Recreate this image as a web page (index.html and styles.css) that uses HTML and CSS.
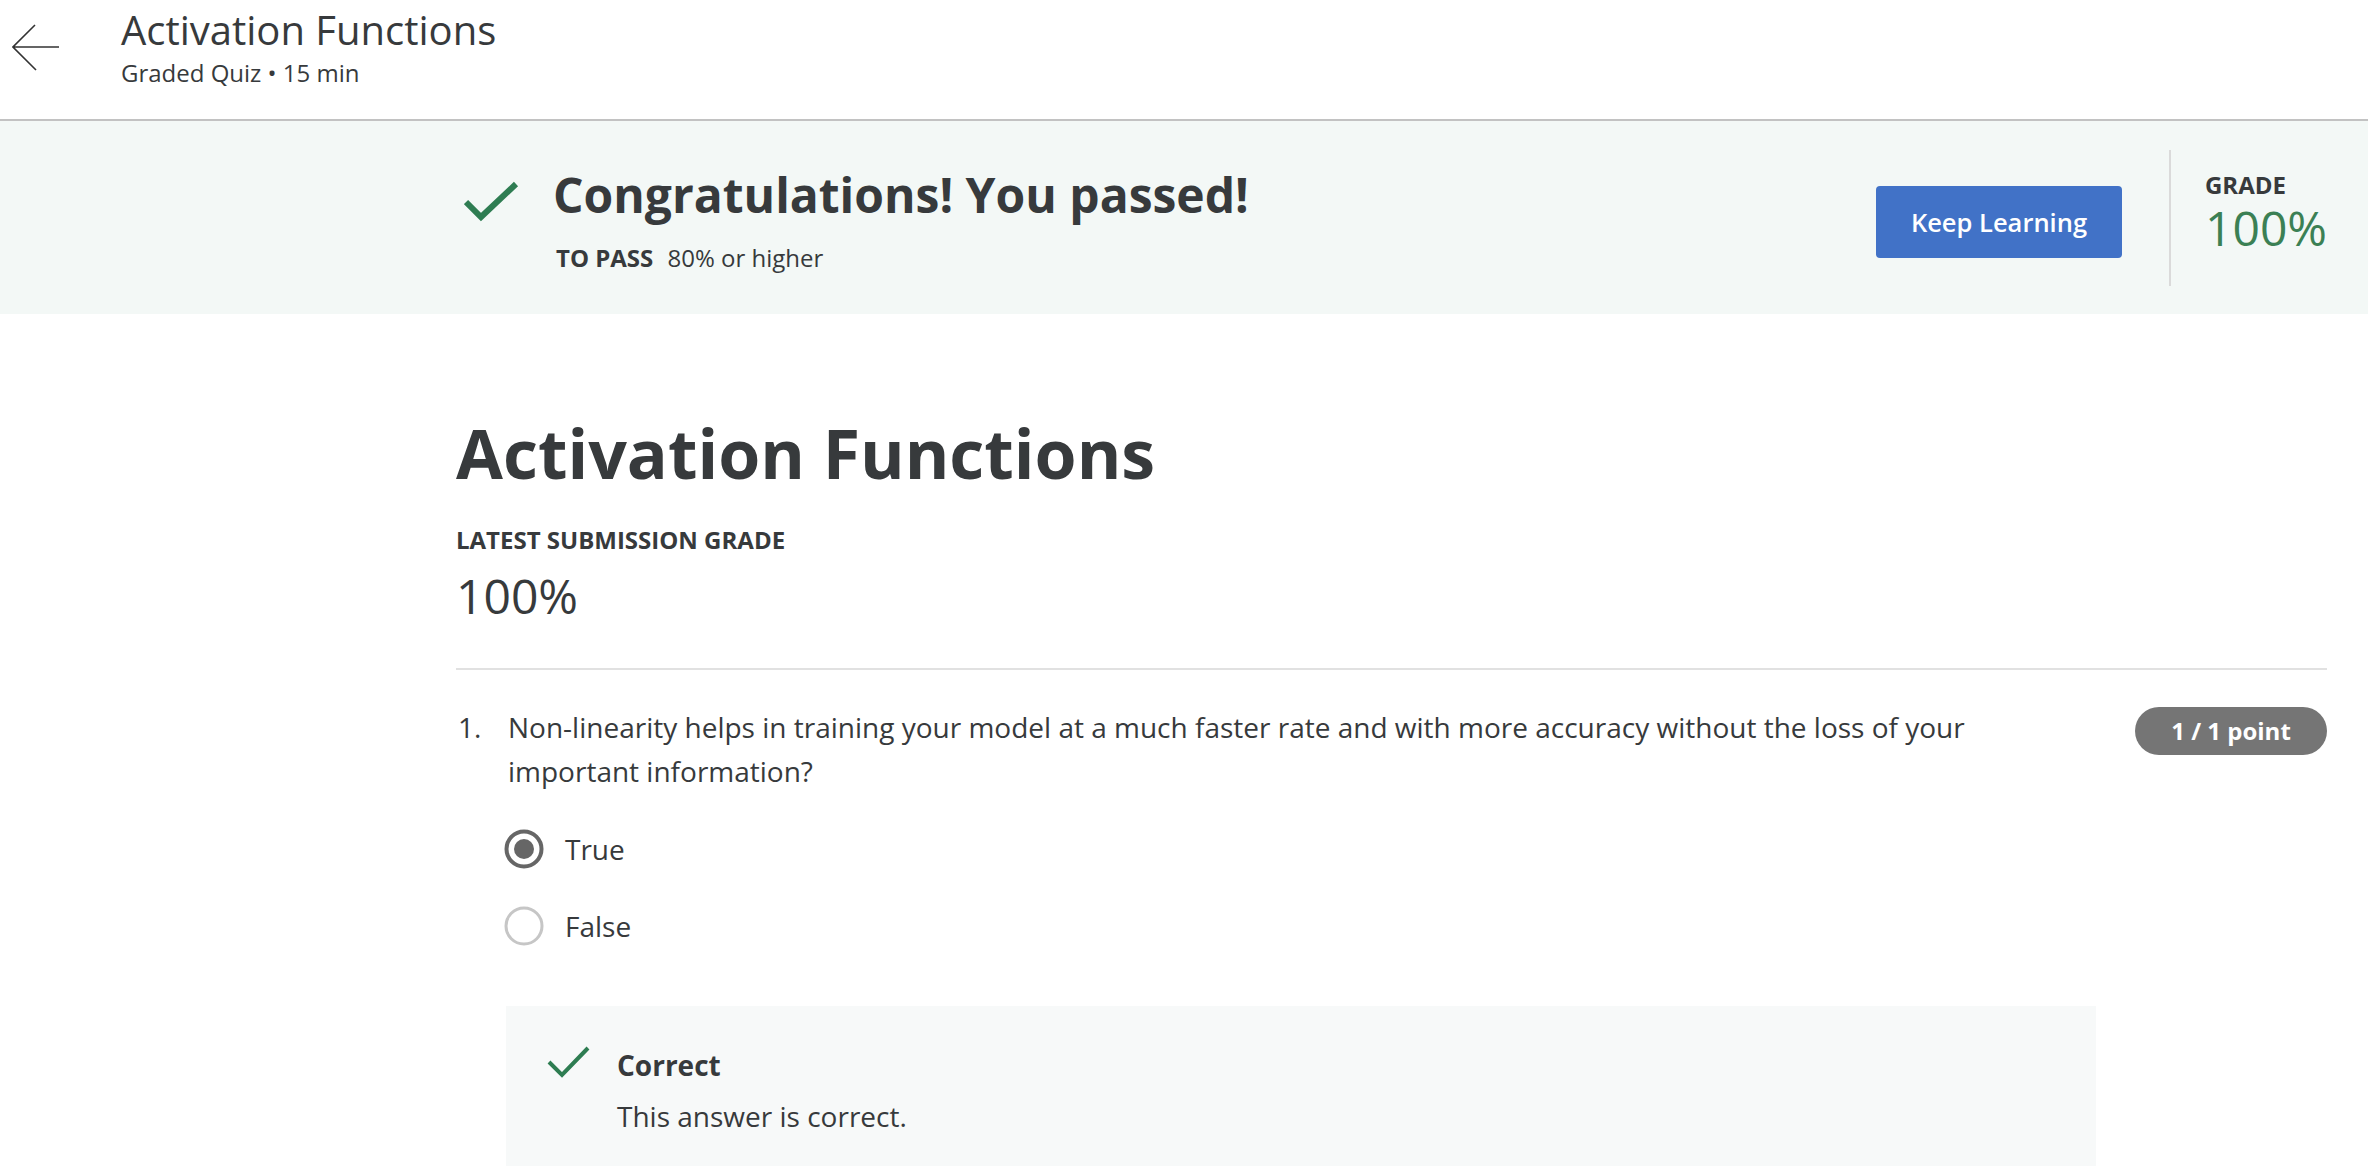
FILE: index.html
```html
<!DOCTYPE html>
<html lang="en">
<head>
<meta charset="utf-8">
<title>Activation Functions</title>
<link rel="stylesheet" href="styles.css">
</head>
<body>
<header class="topbar">
  <a class="back" href="#" aria-label="Back">
    <svg width="48" height="48" viewBox="0 0 48 48"><path d="M47 23 H1 M23 1 L1 23 L24 46" fill="none" stroke="#333" stroke-width="1.6"/></svg>
  </a>
  <div class="topbar-text">
    <div class="topbar-title">Activation Functions</div>
    <div class="topbar-sub">Graded Quiz • 15 min</div>
  </div>
</header>

<section class="banner">
  <svg class="banner-check" width="55" height="41" viewBox="0 0 55 41"><polyline points="2,21 17,36 52,3" fill="none" stroke="#2e7d52" stroke-width="6"/></svg>
  <div class="banner-text">
    <div class="banner-title">Congratulations! You passed!</div>
    <div class="banner-pass"><span class="label">TO PASS</span> 80% or higher</div>
  </div>
  <div class="spacer"></div>
  <button class="btn-primary">Keep Learning</button>
  <div class="vdivider"></div>
  <div class="grade">
    <div class="grade-label">GRADE</div>
    <div class="grade-value">100%</div>
  </div>
</section>

<main class="content">
  <h1 class="quiz-title">Activation Functions</h1>
  <div class="latest-label">LATEST SUBMISSION GRADE</div>
  <div class="latest-value">100%</div>
  <hr class="rule">

  <div class="question">
    <div class="q-num">1.</div>
    <div class="q-text">Non-linearity helps in training your model at a much faster rate and with more accuracy without the loss of your important information?</div>
    <div class="pill">1 / 1 point</div>
  </div>

  <div class="options">
    <div class="option">
      <svg class="radio" width="40" height="40" viewBox="0 0 40 40"><circle cx="20" cy="20" r="17.5" fill="none" stroke="#666" stroke-width="4"/><circle cx="20" cy="20" r="10" fill="#666"/></svg>
      <span>True</span>
    </div>
    <div class="option">
      <svg class="radio" width="40" height="40" viewBox="0 0 40 40"><circle cx="20" cy="20" r="18" fill="#fff" stroke="#c6c6c6" stroke-width="3"/></svg>
      <span>False</span>
    </div>
  </div>

  <div class="feedback">
    <svg class="fb-check" width="44" height="32" viewBox="0 0 44 32"><polyline points="2,16 15,29 41,2" fill="none" stroke="#2e7d52" stroke-width="4"/></svg>
    <div class="fb-text">
      <div class="fb-title">Correct</div>
      <div class="fb-body">This answer is correct.</div>
    </div>
  </div>
</main>
</body>
</html>
```

FILE: styles.css
```css
* { box-sizing: border-box; }
html, body {
  margin: 0;
  padding: 0;
  background: #fff;
  font-family: "Open Sans", "Noto Sans", sans-serif;
  color: #373a3c;
}

.topbar {
  height: 121px;
  border-bottom: 2px solid #c2c2c2;
  display: flex;
  align-items: flex-start;
}
.back {
  display: block;
  margin: 24px 0 0 12px;
  width: 48px;
  height: 48px;
}
.back svg { display: block; }
.topbar-text {
  margin-left: 61px;
  padding-top: 6px;
}
.topbar-title {
  font-size: 40px;
  line-height: 48px;
  font-weight: 400;
}
.topbar-sub {
  font-size: 24px;
  line-height: 30px;
  margin-top: 4px;
}

.banner {
  height: 193px;
  background: #f3f8f6;
  display: flex;
  align-items: flex-start;
  padding: 0 41px 0 456px;
}
.banner-check {
  display: block;
  margin: 60px 0 0 8px;
  flex: none;
}
.banner-text {
  margin: 46px 0 0 34px;
}
.banner-title {
  font-size: 48px;
  line-height: 56px;
  font-weight: 700;
}
.banner-pass {
  margin: 20px 0 0 3px;
  font-size: 24px;
  line-height: 30px;
}
.banner-pass .label {
  font-weight: 700;
  margin-right: 8px;
}
.spacer { flex: 1; }
.btn-primary {
  margin-top: 65px;
  width: 246px;
  height: 72px;
  border: 0;
  border-radius: 4px;
  background: #4172c7;
  color: #fff;
  font-family: inherit;
  font-size: 25.5px;
  font-weight: 600;
  padding: 0;
}
.vdivider {
  margin: 29px 0 0 47px;
  width: 2px;
  height: 136px;
  background: #dadada;
}
.grade {
  margin: 52px 0 0 34px;
}
.grade-label {
  font-size: 24px;
  line-height: 24px;
  font-weight: 700;
}
.grade-value {
  margin-top: 3px;
  font-size: 48px;
  line-height: 56px;
  color: #3b8054;
}

.content {
  padding: 0 41px 0 456px;
}
.quiz-title {
  margin: 97px 0 0;
  font-size: 68px;
  line-height: 84px;
  font-weight: 700;
}
.latest-label {
  margin-top: 30px;
  font-size: 24px;
  line-height: 30px;
  font-weight: 700;
}
.latest-value {
  margin-top: 13px;
  font-size: 48px;
  line-height: 56px;
}
.rule {
  margin: 44px 0 0;
  border: 0;
  height: 2px;
  background: #e1e1e1;
}

.question {
  margin-top: 35px;
  display: flex;
  align-items: flex-start;
  font-size: 28px;
  line-height: 44px;
}
.q-num {
  width: 52px;
  flex: none;
  padding-left: 2px;
}
.q-text {
  flex: 1;
  padding-right: 100px;
}
.pill {
  flex: none;
  margin-top: 2px;
  width: 192px;
  height: 48px;
  border-radius: 24px;
  background: #757575;
  color: #fff;
  font-size: 24px;
  font-weight: 700;
  line-height: 48px;
  text-align: center;
}

.options {
  margin: 36px 0 0 48px;
  display: flex;
  flex-direction: column;
  gap: 37px;
}
.option {
  display: flex;
  align-items: center;
  height: 40px;
  font-size: 28px;
  line-height: 40px;
}
.radio {
  display: block;
  flex: none;
  margin-right: 21px;
}

.feedback {
  margin: 60px 0 0 50px;
  width: 1590px;
  background: #f7f9f9;
  display: flex;
  align-items: flex-start;
  padding: 42px 0 33px 41px;
}
.fb-check {
  display: block;
  flex: none;
  margin-top: -2px;
}
.fb-text {
  margin-left: 26px;
}
.fb-title {
  font-size: 28px;
  line-height: 34px;
  font-weight: 700;
}
.fb-body {
  margin-top: 17px;
  font-size: 28px;
  line-height: 34px;
}
```
